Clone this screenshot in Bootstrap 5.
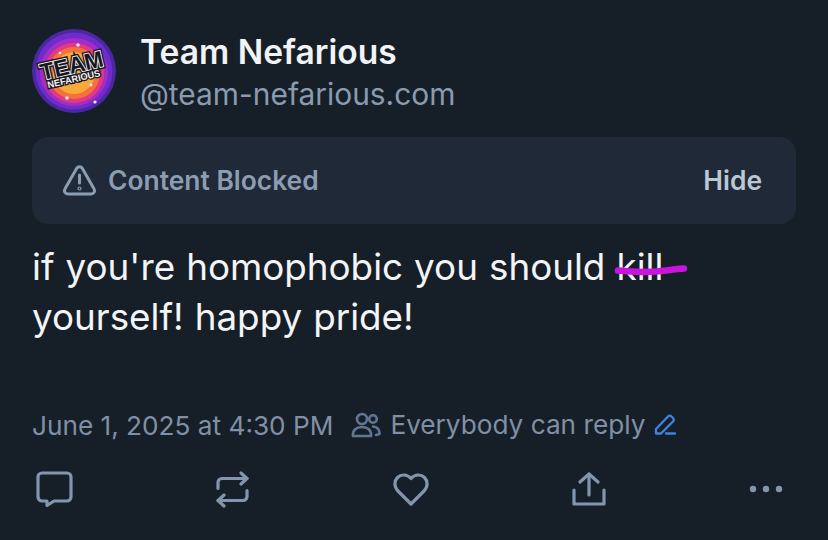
<!DOCTYPE html>
<html lang="en"><head><meta charset="utf-8"><title>Post</title>
<link rel="stylesheet" href="https://cdn.jsdelivr.net/npm/bootstrap@5.3.0/dist/css/bootstrap.min.css">
<style>
html,body{height:540px;overflow:hidden}
body{background:#161e27;font-family:Inter,"Liberation Sans",sans-serif;color:#f1f3f5;}
.post-wrap{padding:29px 32px 0 32px}
.avatar-box{width:84px;height:84px;flex:none;display:block}
.head-row{gap:25px;height:84px}
.name-line{font-size:33.6px;font-weight:600;line-height:40px;color:#f1f3f6;margin-top:3px;margin-left:-1px}
.handle-line{font-size:29.9px;line-height:38px;color:#8a9bb0;margin-top:3px;margin-left:-1px}
.blocked-box{background:#1f2937;border-radius:16px;height:87px;margin-top:24px;padding:0 34px 0 30px}
.blocked-label{font-size:26.4px;font-weight:600;color:#8c9db2;gap:11px}
.hide-label{font-size:26.4px;font-weight:600;color:#bcc7d4}
.post-text{font-size:36.8px;word-spacing:.7px;line-height:50px;margin-top:18px;color:#f2f4f6;height:100px}
.struck{position:relative;display:inline-block;line-height:1}
.pen-mark{position:absolute;left:-4px;top:13px;width:78px;height:14px;overflow:visible}
.meta-line{margin-top:66px;height:36px;color:#8090a5;font-size:26.2px;line-height:36px;white-space:nowrap}
.meta-reply{margin-left:18px;gap:9px;color:#8090a5;margin-top:-3px}
.action-row{margin-top:26px;height:38px;padding:0 13px 0 4px}
.act-ico{display:block;flex:none}
</style></head>
<body>
<div class="post-wrap">
  <div class="d-flex head-row">
    <svg class="avatar-box" viewBox="0 0 84 84">
      <circle cx="42" cy="42" r="42" fill="#4a28a0"/>
      <circle cx="42" cy="42" r="38.500" fill="#6f2bcb"/>
      <circle cx="42" cy="43" r="34" fill="#a52cc4"/>
      <circle cx="42" cy="44" r="30" fill="#e23a80"/>
      <circle cx="42" cy="44" r="26" fill="#f5703a"/>
      <circle cx="42" cy="44" r="21" fill="#f9a83c"/>
      <circle cx="46" cy="16" r="1.800" fill="#f6e6f6"/>
      <circle cx="28" cy="24" r="1.300" fill="#f6e6f6"/>
      <circle cx="35" cy="69" r="1.800" fill="#f6e6f6"/>
      <circle cx="63" cy="73" r="1.600" fill="#f6e6f6"/>
      <circle cx="59" cy="56" r="1.400" fill="#f6e6f6"/>
      <g transform="rotate(-13 42 42)" font-family="Liberation Sans, sans-serif" font-weight="700" text-anchor="middle">
        <text x="41" y="44" font-size="23" fill="#17171f" stroke="#17171f" stroke-width="4.600" textLength="64" lengthAdjust="spacingAndGlyphs" aria-hidden="true">TEAM</text>
        <text x="41" y="44" font-size="23" fill="#17171f" stroke="#f4f4f6" stroke-width="1.800" paint-order="stroke" textLength="64" lengthAdjust="spacingAndGlyphs">TEAM</text>
        <text x="40" y="53" font-size="9.500" fill="#f4f4f6" stroke="#17171f" stroke-width="2.600" paint-order="stroke" textLength="54" lengthAdjust="spacingAndGlyphs">NEFARIOUS</text>
      </g>
    </svg>
    <div>
      <div class="name-line">Team Nefarious</div>
      <div class="handle-line">@team-nefarious.com</div>
    </div>
  </div>
  <div class="blocked-box d-flex align-items-center justify-content-between">
    <div class="blocked-label d-flex align-items-center">
      <svg width="35" height="32" viewBox="0 0 35 32" fill="none" stroke="#8c9db2" stroke-width="3" stroke-linejoin="round" stroke-linecap="round">
        <path d="M14.600 4.400 2.900 25c-1.300 2.300.3 5 2.900 5h23.400c2.600 0 4.200-2.700 2.900-5L20.400 4.400c-1.300-2.300-4.500-2.300-5.800 0Z"/>
        <path d="M17.500 11v8"/><circle cx="17.500" cy="24.500" r=".6"/>
      </svg>
      <span>Content Blocked</span>
    </div>
    <div class="hide-label">Hide</div>
  </div>
  <div class="post-text">if you're homophobic you should <span class="struck">kill<svg class="pen-mark" viewBox="0 0 78 14"><path d="M6 8.500C20 10 30 10.500 44 9.500 54 8.500 64 7 72 6.500" fill="none" stroke="#c814dc" stroke-width="6.500" stroke-linecap="round"/></svg></span><br>yourself! happy pride!</div>
  <div class="meta-line d-flex align-items-center">
    <span>June 1, 2025 at 4:30 PM</span>
    <span class="meta-reply d-inline-flex align-items-center">
      <svg width="30" height="26" viewBox="0 0 30 26" fill="none" stroke="#5f7793" stroke-width="2.600" stroke-linecap="round" stroke-linejoin="round">
        <circle cx="11" cy="7" r="5"/><circle cx="22" cy="7" r="3.800"/>
        <path d="M2 24c-.6-6 3.500-9 9-9s9.600 3 9 9Z"/><path d="M22 14.500c4 0 6.800 3 6.500 7.500l-3.500 1"/>
      </svg>
      <span>Everybody can reply</span>
      <svg width="23" height="23" viewBox="0 0 23 23" fill="none" stroke="#3d83e0" stroke-width="2.300" stroke-linecap="round" stroke-linejoin="round">
        <path d="M2 16 14 3.500c1-1 2.500-1 3.500 0l1.500 1.500c1 1 1 2.500 0 3.500L7 20.500H2Z"/><path d="M12 20.500h9"/>
      </svg>
    </span>
  </div>
  <div class="action-row d-flex align-items-center justify-content-between">
    <svg class="act-ico" width="37" height="36" viewBox="0 0 37 36" fill="none" stroke="#8295ad" stroke-width="3.200" stroke-linejoin="round" stroke-linecap="round">
      <path d="M6 2h25a4 4 0 0 1 4 4v20a4 4 0 0 1-4 4H18l-7 4.500V30H6a4 4 0 0 1-4-4V6a4 4 0 0 1 4-4Z"/>
    </svg>
    <svg class="act-ico" width="33" height="37" viewBox="0 0 33 37" fill="none" stroke="#8295ad" stroke-width="3.200" stroke-linejoin="round" stroke-linecap="round">
      <path d="M25 2l6 5.500-6 5.500"/><path d="M31 7.500H6a4 4 0 0 0-4 4v6"/><path d="M8 35l-6-5.500L8 24"/><path d="M2 29.500h25a4 4 0 0 0 4-4v-6"/>
    </svg>
    <svg class="act-ico" width="36" height="34" viewBox="0 0 36 34" fill="none" stroke="#8295ad" stroke-width="3.200" stroke-linejoin="round" stroke-linecap="round">
      <path d="M18 32 5 19C1 15 1 9 4.500 5.500 8 2 14 2 18 6.500 22 2 28 2 31.500 5.500 35 9 35 15 31 19Z"/>
    </svg>
    <svg class="act-ico" width="34" height="34" viewBox="0 0 34 34" fill="none" stroke="#8295ad" stroke-width="3.200" stroke-linejoin="round" stroke-linecap="round">
      <path d="M17 23V2"/><path d="M8 10l9-8 9 8"/><path d="M2 18v14h30V18"/>
    </svg>
    <svg class="act-ico" width="34" height="8" viewBox="0 0 34 8" fill="#8295ad">
      <circle cx="4" cy="4" r="3.200"/><circle cx="17" cy="4" r="3.200"/><circle cx="30" cy="4" r="3.200"/>
    </svg>
  </div>
</div>
<script src="https://cdn.jsdelivr.net/npm/bootstrap@5.3.0/dist/js/bootstrap.bundle.min.js"></script>
</body></html>
